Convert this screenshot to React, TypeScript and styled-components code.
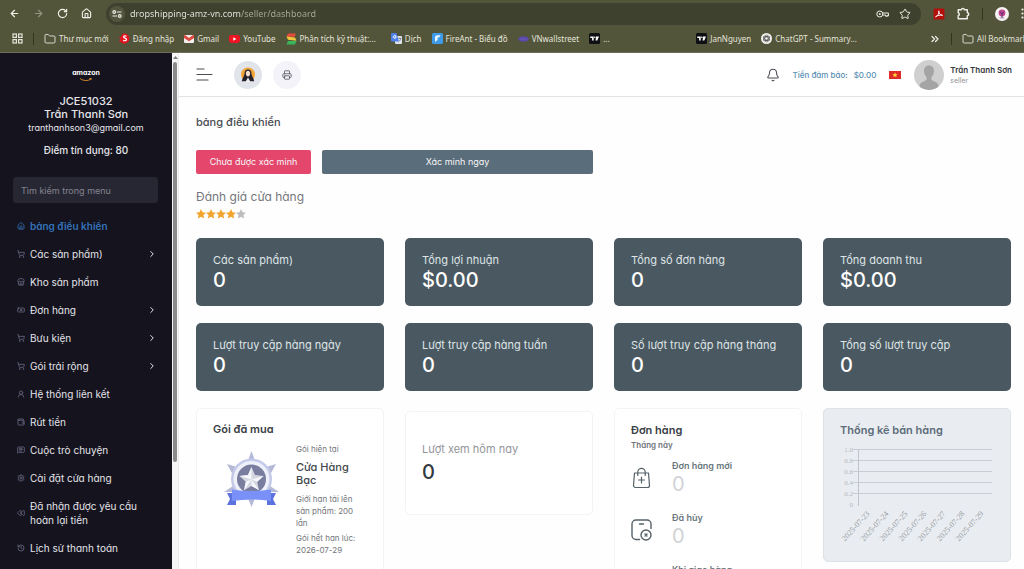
import React from "react";
import styled, { createGlobalStyle } from "styled-components";
import {
  ArrowLeft,
  ArrowRight,
  RotateCw,
  House,
  Star,
  Folder,
  ShoppingCart,
  Store,
  Banknote,
  UserRound,
  Wallet,
  MessageSquareText,
  Settings,
  Rewind,
  History,
  ChevronRight,
  ChevronsRight,
  Printer,
  Bell,
} from "lucide-react";

const GlobalStyle = createGlobalStyle`
  *, *::before, *::after { box-sizing: border-box; }
  html, body, #root { height: 100%; }
  body { margin: 0; overflow: hidden; background: #fff; font-family: Inter, "Noto Sans", sans-serif; font-feature-settings: "cv11"; }
  button, input { font: inherit; font-feature-settings: inherit; }
  button { border: 0; padding: 0; background: none; color: inherit; cursor: pointer; }
  a { color: inherit; text-decoration: none; }
  svg { display: block; flex: none; }
  h1, h2, h3, p, ul { margin: 0; padding: 0; }
`;

const Shell = styled.div`
  height: 100vh;
  display: flex;
  flex-direction: column;
  overflow: hidden;
`;

/* ---------- browser bars ---------- */

const BrowserBar = styled.div`
  flex: none;
  background: #53553b;
  color: #e4e4da;
  font-family: "Noto Sans", "Open Sans", sans-serif;
  font-feature-settings: normal;
  border-bottom: 1px solid #6d6d5c;
`;

const Toolbar = styled.div`
  height: 27px;
  display: flex;
  align-items: center;
  padding-left: 9px;
  overflow: hidden;
`;

const NavButtons = styled.div`
  display: flex;
  align-items: center;
  gap: 13px;
  width: 97px;
`;

const ToolButton = styled.button<{ $dim?: boolean }>`
  flex: none;
  color: ${(p) => (p.$dim ? "#92937f" : "#f0f0e8")};
`;

const Omnibox = styled.div`
  flex: 1;
  height: 22px;
  display: flex;
  align-items: center;
  gap: 10px;
  padding: 0 10px 0 3px;
  border-radius: 11px;
  background: #3f412f;
`;

const SiteInfo = styled.button`
  flex: none;
  width: 16px;
  height: 16px;
  border-radius: 50%;
  background: #53553f;
  display: grid;
  place-items: center;
`;

const AddressInput = styled.input`
  flex: 1;
  min-width: 0;
  margin-left: -5px;
  padding: 0;
  border: 0;
  outline: 0;
  font-size: 9px;
  line-height: 16px;
  color: #e4e4da;
  background: linear-gradient(90deg, #ededE5 111px, #a9aa9a 111px) text;
  -webkit-text-fill-color: transparent;
`;

const Extensions = styled.div`
  flex: none;
  width: 103px;
  display: flex;
  align-items: center;
  gap: 12px;
  padding-left: 12px;
`;

const Separator = styled.span`
  flex: none;
  width: 1px;
  height: 12px;
  background: #33351f;
`;

const BookmarkBar = styled.nav`
  height: 25px;
  display: flex;
  align-items: center;
  gap: 15px;
  padding: 0 0 2px 12px;
  font-size: 8px;
  line-height: 12px;
  white-space: nowrap;
  overflow: hidden;
`;

const BookmarkGroup = styled.div<{ $grow?: number }>`
  display: flex;
  align-items: center;
  gap: 10px;
  flex: ${(p) => (p.$grow ? `${p.$grow} 1 0` : "none")};
`;

const BookmarkTail = styled(BookmarkGroup)`
  width: 95px;
`;

const BookmarkLink = styled.a`
  flex: none;
  display: flex;
  align-items: center;
  gap: 3px;
`;

/* ---------- sidebar ---------- */

const Body = styled.div`
  flex: 1;
  min-height: 0;
  display: flex;
`;

const Sidebar = styled.aside`
  flex: none;
  width: 172px;
  padding: 15px 13px 0;
  overflow: hidden;
  background: #14131e;
  color: #e6e6ea;
`;

const Logo = styled.a`
  display: flex;
  flex-direction: column;
  align-items: center;
  font-size: 7px;
  line-height: 10px;
  font-weight: 700;
  color: #fff;
  margin: 0 0 13px;
`;

const SellerBlock = styled.div`
  text-align: center;
  margin: 0 -8px 20px;
`;

const SellerName = styled.p`
  font-size: 11px;
  line-height: 13px;
  font-weight: 500;
`;

const SellerMail = styled.p`
  font-size: 9px;
  line-height: 13px;
`;

const Credit = styled.p`
  margin-top: 9px;
  font-size: 10px;
  line-height: 14px;
  font-weight: 500;
`;

const MenuSearch = styled.input`
  display: block;
  width: 145px;
  height: 26px;
  padding: 0 8px;
  border: 0;
  border-radius: 3px;
  background: #272733;
  color: #fff;
  font-size: 9px;
  &::placeholder { color: #84848f; opacity: 1; }
`;

const Menu = styled.ul`
  list-style: none;
  margin: 9px 0 0;
`;

const MenuLink = styled.a<{ $active?: boolean }>`
  display: flex;
  align-items: center;
  gap: 5px;
  padding: 7px 2px 7px 4px;
  font-size: 10px;
  line-height: 14px;
  font-weight: ${(p) => (p.$active ? 600 : 400)};
  color: ${(p) => (p.$active ? "#3572b8" : "#e4e4e9")};
  > svg:first-child { color: ${(p) => (p.$active ? "#3572b8" : "#6b6a84")}; }
`;

const MenuLabel = styled.span`
  flex: 1;
`;

const ScrollTrack = styled.div`
  flex: none;
  width: 7px;
  display: flex;
  flex-direction: column;
  align-items: center;
  padding-top: 3px;
  gap: 3px;
  background: #f6f6f6;
  border-right: 1px solid #ececec;
`;

const ScrollThumb = styled.div`
  width: 4px;
  height: 78%;
  border-radius: 2px;
  background: #8b8b8b;
`;

/* ---------- main area ---------- */

const Main = styled.main`
  flex: 1;
  min-width: 0;
  overflow: hidden;
  background: #fefefe;
`;

const Header = styled.header`
  height: 44px;
  display: flex;
  align-items: center;
  padding: 0 12px 0 17px;
  border-bottom: 1px solid #e2e3e6;
  background: #fff;
`;

const RoundButton = styled.button<{ $tone: string; $gap: number }>`
  width: 28px;
  height: 28px;
  margin-left: ${(p) => p.$gap}px;
  border-radius: 50%;
  background: ${(p) => p.$tone};
  display: grid;
  place-items: center;
  color: #55565f;
`;

const HeaderRight = styled.div`
  margin-left: auto;
  display: flex;
  align-items: center;
  gap: 13px;
`;

const Deposit = styled.a`
  display: flex;
  gap: 6px;
  font-size: 8px;
  line-height: 12px;
  font-weight: 500;
  color: #5a90b5;
`;

const Profile = styled.button`
  display: flex;
  align-items: center;
  gap: 6px;
  text-align: left;
`;

const ProfileName = styled.span`
  display: block;
  font-size: 8px;
  line-height: 12px;
  font-weight: 600;
  color: #33363b;
`;

const ProfileRole = styled.span`
  display: block;
  font-size: 7px;
  line-height: 9px;
  color: #909296;
`;

const Content = styled.div`
  padding: 17px 13px 0 17px;
`;

const PageTitle = styled.h1`
  font-size: 11px;
  line-height: 16px;
  font-weight: 500;
  color: #4a4c52;
`;

const Grid = styled.div`
  display: grid;
  grid-template-columns: repeat(4, minmax(0, 1fr));
  column-gap: 21px;
  row-gap: 17px;
  align-items: start;
`;

const VerifyRow = styled(Grid)`
  margin: 20px 0 15px;
`;

const VerifyButtons = styled.div`
  grid-column: span 2;
  display: flex;
  gap: 11px;
`;

const VerifyButton = styled.button<{ $main?: boolean }>`
  flex: ${(p) => (p.$main ? "1" : "none")};
  width: 115px;
  height: 24px;
  border-radius: 2px;
  font-size: 9px;
  line-height: 12px;
  padding-bottom: 1px;
  color: #f6f6f8;
  background: ${(p) => (p.$main ? "#5a6d7a" : "#e4476b")};
`;

const RatingTitle = styled.h2`
  font-size: 12px;
  line-height: 16px;
  font-weight: 400;
  color: #75767b;
`;

const Stars = styled.div`
  display: flex;
  margin: 4px 0 19px;
`;

const StatCard = styled.section`
  height: 68px;
  padding: 14px 17px 0;
  border-radius: 5px;
  background: #4a5961;
  color: #fff;
`;

const StatLabel = styled.h3<{ $muted?: boolean }>`
  font-size: 11px;
  line-height: 16px;
  font-weight: 400;
  white-space: nowrap;
  color: ${(p) => (p.$muted ? "#93959b" : "#dfe4e7")};
`;

const StatValue = styled.p`
  font-size: 20px;
  line-height: 24px;
  font-weight: 500;
`;

const LowerGrid = styled(Grid)`
  margin-top: 17px;
`;

const Card = styled.section`
  padding: 13px 16px 30px;
  border: 1px solid #f3f3f4;
  border-radius: 5px;
  background: #fff;
`;

const PackageCard = styled(Card)`
  padding-top: 12px;
`;

const ViewsCard = styled(Card)`
  margin-top: 3px;
  height: 104px;
  padding-top: 29px;
  color: #33393f;
  ${StatValue} { margin-top: 3px; }
`;

const ChartCard = styled(Card)`
  height: 154px;
  padding-bottom: 0;
  background: #e9edf2;
  border-color: #dde2e7;
`;

const CardTitle = styled.h2<{ $tone?: string }>`
  font-size: 11px;
  line-height: 16px;
  font-weight: 600;
  color: ${(p) => p.$tone ?? "#3a4046"};
`;

const PackageRow = styled.div`
  display: flex;
  gap: 17px;
  margin-top: 6px;
  padding: 0 6px 0 11px;
  > svg { margin-top: 8px; }
`;

const PackageText = styled.div`
  flex: 1;
  font-size: 8px;
  line-height: 12px;
  color: #73767b;
`;

const PackageName = styled.p`
  margin: 6px 0;
  font-size: 11px;
  line-height: 13px;
  font-weight: 500;
  color: #42474c;
`;

const PackageLine = styled.p`
  margin-bottom: 3px;
`;

const Period = styled.p`
  font-size: 8px;
  line-height: 14px;
  font-weight: 600;
  color: #70757a;
`;

const OrderRow = styled.div`
  display: grid;
  grid-template-columns: 21px 1fr;
  column-gap: 20px;
  align-items: center;
  height: 34px;
  margin: 8px 0 18px;
  color: #566268;
`;

const OrderLabel = styled.p`
  font-size: 9px;
  line-height: 12px;
  font-weight: 600;
  color: #69767c;
`;

const OrderValue = styled.p`
  font-size: 20px;
  line-height: 24px;
  color: #cfd3d6;
`;

const Chart = styled.svg`
  width: 100%;
  overflow: visible;
  font-family: "Liberation Serif", serif;
`;

/* ---------- drawings ---------- */

const TuneIcon = () => (
  <svg width="10" height="8" viewBox="0 0 10 8" fill="none" stroke="#ecece4" strokeWidth="1.2">
    <circle cx="2.2" cy="2" r="1.3" />
    <path d="M4.8 2H9.500M.5 6h4.700" />
    <circle cx="7.8" cy="6" r="1.3" />
  </svg>
);

const KeyIcon = () => (
  <svg width="13" height="8" viewBox="0 0 13 8" fill="none" stroke="currentColor" strokeWidth="1">
    <circle cx="3.8" cy="4" r="3" />
    <circle cx="3.8" cy="4" r=".6" fill="currentColor" />
    <path d="M6.600 3h5.800v3h-1.200M6.500 5h3v1.200h1.800V5" />
  </svg>
);

const ExtensionIcon = () => (
  <svg width="13" height="13" viewBox="0 0 13 13" fill="none" stroke="currentColor" strokeWidth="1.4" strokeLinejoin="round">
    <path d="M1.200 2.800h3.300a1.400 1.400 0 0 1 2.800 0h3v3a1.400 1.400 0 0 1 0 2.900v3.100H1.200V8.700a1.500 1.500 0 0 0 0-2.900z" />
  </svg>
);

const DotsIcon = () => (
  <svg width="3" height="11" viewBox="0 0 3 11" fill="currentColor">
    <circle cx="1.5" cy="1.5" r="1.1" />
    <circle cx="1.5" cy="5.5" r="1.1" />
    <circle cx="1.5" cy="9.5" r="1.1" />
  </svg>
);

const AppsIcon = () => (
  <svg width="11" height="11" viewBox="0 0 11 11" fill="none" stroke="#e4e4da" strokeWidth="1.2">
    <rect x="1" y="1" width="3.4" height="3.4" />
    <rect x="6.6" y="1" width="3.4" height="3.4" />
    <rect x="1" y="6.6" width="3.4" height="3.4" />
    <rect x="6.6" y="6.6" width="3.4" height="3.4" />
  </svg>
);

const SIcon = () => (
  <svg width="11" height="11" viewBox="0 0 11 11">
    <path d="M3 1.2A5 5 0 1 1 2 9.3L0 8l1.6-1.6L0 4.6l2-.8z" fill="#e3131f" />
    <path d="M7.4 3.4C6.4 2.6 4.6 2.8 4.6 4s2.9 1 2.9 2.4S5.300 8.200 4.200 7.200" fill="none" stroke="#fff" strokeWidth="1.2" />
  </svg>
);

const GmailIcon = () => (
  <svg width="10" height="10" viewBox="0 0 10 10">
    <rect x="0" y="1" width="10" height="8" rx="1" fill="#f4efed" />
    <path d="M0 4V2a1 1 0 0 1 1.500-.8L5 4l3.500-2.800A1 1 0 0 1 10 2v2L5 7.300z" fill="#dc4a40" />
  </svg>
);

const YouTubeIcon = () => (
  <svg width="11" height="10" viewBox="0 0 11 10">
    <rect y="1" width="11" height="8" rx="2.4" fill="#ef1522" />
    <path d="M4.300 3.300 7.300 5 4.300 6.700z" fill="#fff" />
  </svg>
);

const StackIcon = () => (
  <svg width="11" height="12" viewBox="0 0 11 12">
    <path d="M2 .5h8L8.500 3.800H.5z" fill="#e84b3c" />
    <path d="M.5 3.600 9 4.500l1.500 3.300L2 6.800z" fill="#f0c63c" />
    <path d="M2 8h8.500L9 11.500H.5z" fill="#39b65a" />
  </svg>
);

const TranslateIcon = () => (
  <svg width="11" height="11" viewBox="0 0 11 11">
    <rect x="4" y="3" width="7" height="8" rx="1" fill="#dfe3ec" />
    <path d="M0 1a1 1 0 0 1 1-1h4.500L8 8.500H1a1 1 0 0 1-1-1z" fill="#4d7fe8" />
    <path d="M5.500 3.300H4v1.200h1.100A1.500 1.500 0 1 1 4.900 3" fill="none" stroke="#fff" strokeWidth=".8" />
    <path d="M7.500 5.500h2.600M8.800 4.700v.8M9.800 5.500c-.3 1.500-1 2.400-2 3" fill="none" stroke="#5b6478" strokeWidth=".7" />
  </svg>
);

const FireAntIcon = () => (
  <svg width="11" height="11" viewBox="0 0 11 11">
    <rect width="11" height="11" rx="1.5" fill="#3d9bea" />
    <path d="M3 9V4.500C3 3 4 2.300 5.400 2.300H8.500L7.200 4.600H5.600V7z" fill="#eaf6ff" />
  </svg>
);

const VnIcon = () => (
  <svg width="11" height="8" viewBox="0 0 11 8">
    <ellipse cx="5.5" cy="4" rx="5.2" ry="2.8" fill="#5a4aa8" />
    <path d="M2 3.200 4 5l1.500-1.800L7.200 5 9 3.200" fill="none" stroke="#6f61bd" strokeWidth=".8" />
  </svg>
);

const TradingViewIcon = () => (
  <svg width="11" height="11" viewBox="0 0 11 11">
    <rect width="11" height="11" rx="1.5" fill="#0f1013" />
    <path d="M1.300 3.500h3.400v4H3.100V5.100H1.300zM7 3.500h3L8.300 7.500H6.600z" fill="#fff" />
    <circle cx="5.8" cy="4.3" r=".8" fill="#fff" />
  </svg>
);

const ChatGptIcon = () => (
  <svg width="11" height="11" viewBox="0 0 11 11">
    <circle cx="5.5" cy="5.5" r="5.5" fill="#f1f1ee" />
    <g fill="none" stroke="#4b4c49" strokeWidth=".7">
      <ellipse cx="5.5" cy="5.5" rx="1.7" ry="3.5" />
      <ellipse cx="5.5" cy="5.5" rx="1.7" ry="3.5" transform="rotate(60 5.5 5.5)" />
      <ellipse cx="5.5" cy="5.5" rx="1.7" ry="3.5" transform="rotate(120 5.5 5.5)" />
    </g>
  </svg>
);

const PdfIcon = () => (
  <svg width="12" height="12" viewBox="0 0 12 12">
    <rect x=".5" y=".5" width="11" height="11" rx="1.5" fill="#b3100c" />
    <path d="M2.500 8.800C5 8 6.200 5.500 5.800 2.800 5.800 5.500 7 7 9.600 7.300 7.300 6.800 4.600 7.300 2.500 8.800z" fill="none" stroke="#fff" strokeWidth=".9" />
  </svg>
);

const AccountIcon = () => (
  <svg width="14" height="14" viewBox="0 0 14 14">
    <circle cx="7" cy="7" r="7" fill="#f7f1f4" />
    <circle cx="7" cy="6" r="3.4" fill="#c2468c" />
    <path d="M5 4.500 7 7l2-2.500M7 7v4" stroke="#5a2c7a" strokeWidth="1" fill="none" />
    <path d="M4.500 11h5" stroke="#9a8fa0" strokeWidth=".8" />
  </svg>
);

const Smile = () => (
  <svg width="14" height="4" viewBox="0 0 14 4">
    <path d="M1 .5c3.500 2.600 8 2.600 11 .4M10.300.5h2l-.5 1.600" fill="none" stroke="#d98a2b" strokeWidth="1" />
  </svg>
);

const MenuLines = () => (
  <svg width="17" height="15" viewBox="0 0 17 15" stroke="#4c4d53" strokeWidth="1.2" strokeLinecap="round">
    <path d="M1 2h7M1 7.500h15M1 13h11" />
  </svg>
);

const WomanIcon = () => (
  <svg width="16" height="16" viewBox="0 0 16 16">
    <circle cx="8" cy="7.5" r="7" fill="#f0a53a" />
    <path d="M8 2.500C5.600 2.500 4.700 4 4.600 6.200 4.400 9 2.500 10.500 1.800 14.200h12.400C13.500 10.500 11.600 9 11.400 6.200 11.300 4 10.400 2.500 8 2.500z" fill="#25222b" />
    <ellipse cx="8" cy="6.6" rx="2.1" ry="2.8" fill="#f6dfd2" />
    <path d="M5.500 15 8 10.500l2.500 4.500z" fill="#f4f1f3" />
  </svg>
);

const Flag = () => (
  <svg width="12" height="8" viewBox="0 0 12 8" role="img" aria-label="Tiếng Việt">
    <rect width="12" height="8" fill="#dd2c27" />
    <path d="M6 1.300l.7 1.900h2L7.100 4.400l.6 1.900L6 5.200 4.300 6.300l.6-1.900-1.600-1.200h2z" fill="#ffdc3c" />
  </svg>
);

const Avatar = () => (
  <svg width="30" height="30" viewBox="0 0 30 30">
    <clipPath id="avatar-clip"><circle cx="15" cy="15" r="15" /></clipPath>
    <g clipPath="url(#avatar-clip)">
      <rect width="30" height="30" fill="#cfcfcf" />
      <path d="M15 5.500c-3.400 0-5.200 2.600-5 5.800.2 2.700 1.200 4.600 2.500 5.900v2.500c-1 1.600-5.800 2-7 5.300V30h19v-5c-1.200-3.300-6-3.700-7-5.300v-2.500c1.300-1.300 2.300-3.200 2.500-5.900.2-3.200-1.600-5.800-5-5.800z" fill="#a4a4a4" />
    </g>
  </svg>
);

const StarIcon = ({ on }: { on: boolean }) => (
  <svg width="10" height="10" viewBox="0 0 10 10">
    <path d="M5 0l1.500 3.200 3.500.450-2.550 2.400.65 3.500L5 7.850 1.900 9.550l.65-3.500L0 3.650l3.500-.45z" fill={on ? "#f2a42e" : "#bdbdc0"} />
  </svg>
);

const SilverBadge = () => (
  <svg width="55" height="57" viewBox="0 0 55 57">
    <path d="M27.500 0l4 11h-8zM27.500 56l-4-10h8zM3 13l10 3-4.500 7zM52 13l-10 3 4.500 7zM0 41l9-6 3 6zM55 41l-9-6-3 6z" fill="#b4b9d8" />
    <circle cx="27.5" cy="28" r="20.5" fill="#c3c9e8" />
    <circle cx="27.5" cy="28" r="18" fill="#eef0fa" />
    <circle cx="27.5" cy="28" r="14.5" fill="#797d9e" />
    <path d="M27.500 16l3.500 8 8.600.9-6.400 5.800 1.800 8.500-7.500-4.300-7.500 4.300 1.800-8.500-6.400-5.800 8.600-.9z" fill="#d4d7e2" />
    <path d="M27.500 16v12.500L24 24zM39.600 24.900 27.500 28.500l5.700 2.200zM35 39.200l-7.500-10.700v6.400zM20 39.200l7.500-10.700-5.700 2.200zM15.400 24.900l12.100 3.600L24 24z" fill="#f6f7fb" />
    <path d="M3 42h9v12H3l3-6zM52 42h-9v12h9l-3-6z" fill="#5c72dd" />
    <path d="M8 38.500q19.500 3 39 0v11.500q-19.500-3-39 0z" fill="#7890f8" />
  </svg>
);

const BagPlusIcon = () => (
  <svg width="21" height="22" viewBox="0 0 21 22" fill="none" stroke="currentColor" strokeWidth="1.2" strokeLinecap="round" strokeLinejoin="round">
    <path d="M3.500 6h14l1 12.500a2 2 0 0 1-2 2h-12a2 2 0 0 1-2-2z" />
    <path d="M6.800 8.500V5a3.700 3.700 0 0 1 7.400 0v3.500M10.500 10v6M7.500 13h6" />
  </svg>
);

const BoxCancelIcon = () => (
  <svg width="21" height="22" viewBox="0 0 21 22" fill="none" stroke="currentColor" strokeWidth="1.4" strokeLinecap="round">
    <path d="M8.500 20.500H5a4 4 0 0 1-4-4V5a4 4 0 0 1 4-4h11a4 4 0 0 1 4 4v4.500M8.500 5h4" />
    <circle cx="15" cy="16" r="5" />
    <path d="M14 15l2 2M16 15l-2 2" />
  </svg>
);

/* ---------- data ---------- */

const bookmarks = [
  { label: "Đăng nhập", icon: <SIcon /> },
  { label: "Gmail", icon: <GmailIcon /> },
  { label: "YouTube", icon: <YouTubeIcon /> },
  { label: "Phân tích kỹ thuật:...", icon: <StackIcon /> },
];

const moreBookmarks = [
  { label: "Dịch", icon: <TranslateIcon /> },
  { label: "FireAnt - Biểu đồ", icon: <FireAntIcon /> },
  { label: "VNwallstreet", icon: <VnIcon /> },
  { label: "...", icon: <TradingViewIcon /> },
];

const lastBookmarks = [
  { label: "JanNguyen", icon: <TradingViewIcon /> },
  { label: "ChatGPT - Summary...", icon: <ChatGptIcon /> },
];

const menu = [
  { label: "bảng điều khiển", icon: House, active: true },
  { label: "Các sản phẩm)", icon: ShoppingCart, nested: true },
  { label: "Kho sản phẩm", icon: Store },
  { label: "Đơn hàng", icon: Banknote, nested: true },
  { label: "Bưu kiện", icon: ShoppingCart, nested: true },
  { label: "Gói trải rộng", icon: ShoppingCart, nested: true },
  { label: "Hệ thống liên kết", icon: UserRound },
  { label: "Rút tiền", icon: Wallet },
  { label: "Cuộc trò chuyện", icon: MessageSquareText },
  { label: "Cài đặt cửa hàng", icon: Settings },
  { label: "Đã nhận được yêu cầu hoàn lại tiền", icon: Rewind },
  { label: "Lịch sử thanh toán", icon: History },
];

const stats = [
  ["Các sản phẩm)", "0"],
  ["Tổng lợi nhuận", "$0.00"],
  ["Tổng số đơn hàng", "0"],
  ["Tổng doanh thu", "$0.00"],
  ["Lượt truy cập hàng ngày", "0"],
  ["Lượt truy cập hàng tuần", "0"],
  ["Số lượt truy cập hàng tháng", "0"],
  ["Tổng số lượt truy cập", "0"],
];

const ticks = ["1.0", "0.8", "0.6", "0.4", "0.2", "0"];
const days = [23, 24, 25, 26, 27, 28, 29];

const Bookmarks = ({ items }: { items: typeof bookmarks }) => (
  <>
    {items.map((b) => (
      <BookmarkLink href="#" key={b.label}>
        {b.icon}
        {b.label}
      </BookmarkLink>
    ))}
  </>
);

const SalesChart = () => (
  <Chart viewBox="0 0 154 100" role="img" aria-label="Thống kê bán hàng">
    {ticks.map((t, i) => (
      <g key={t}>
        {i < 5 && <path d={`M13 ${11.5 + i * 11}H152`} stroke="#c9cdd3" />}
        <text x="13" y={14 + i * 11} fontSize="7" textAnchor="end" fill="#b4b8bd">{t}</text>
      </g>
    ))}
    <path d="M18.500 11v57" stroke="#c0c4ca" />
    {days.map((d, i) => (
      <text key={d} fontSize="8" textAnchor="end" fill="#989ca1" transform={`translate(${30 + i * 19} 76) rotate(-48)`}>
        {`2025-07-${d}`}
      </text>
    ))}
  </Chart>
);

export default function App() {
  return (
    <Shell>
      <GlobalStyle />
      <BrowserBar>
        <Toolbar>
          <NavButtons>
            <ToolButton aria-label="Quay lại"><ArrowLeft size={11} strokeWidth={2.6} /></ToolButton>
            <ToolButton $dim aria-label="Tiến"><ArrowRight size={11} strokeWidth={2.6} /></ToolButton>
            <ToolButton aria-label="Tải lại"><RotateCw size={11} strokeWidth={2.6} /></ToolButton>
            <ToolButton aria-label="Trang chủ"><House size={11} strokeWidth={2.4} /></ToolButton>
          </NavButtons>
          <Omnibox>
            <SiteInfo aria-label="Thông tin trang"><TuneIcon /></SiteInfo>
            <AddressInput aria-label="Địa chỉ" defaultValue="dropshipping-amz-vn.com/seller/dashboard" />
            <ToolButton aria-label="Mật khẩu"><KeyIcon /></ToolButton>
            <ToolButton aria-label="Đánh dấu"><Star size={12} /></ToolButton>
          </Omnibox>
          <Extensions>
            <ToolButton aria-label="PDF"><PdfIcon /></ToolButton>
            <ToolButton aria-label="Tiện ích"><ExtensionIcon /></ToolButton>
            <Separator />
            <ToolButton aria-label="Tài khoản"><AccountIcon /></ToolButton>
            <ToolButton aria-label="Menu"><DotsIcon /></ToolButton>
          </Extensions>
        </Toolbar>
        <BookmarkBar>
          <BookmarkGroup>
            <AppsIcon />
            <Separator />
            <BookmarkLink href="#"><Folder size={12} strokeWidth={1.8} />Thư mục mới</BookmarkLink>
            <Bookmarks items={bookmarks} />
          </BookmarkGroup>
          <BookmarkGroup $grow={4}>
            <Bookmarks items={moreBookmarks} />
          </BookmarkGroup>
          <BookmarkGroup $grow={3}>
            <Bookmarks items={lastBookmarks} />
          </BookmarkGroup>
          <BookmarkTail>
            <ToolButton aria-label="Thêm dấu trang"><ChevronsRight size={12} strokeWidth={2.4} /></ToolButton>
            <Separator />
            <BookmarkLink href="#"><Folder size={12} strokeWidth={1.8} />All Bookmarks</BookmarkLink>
          </BookmarkTail>
        </BookmarkBar>
      </BrowserBar>

      <Body>
        <Sidebar>
          <Logo href="#">amazon<Smile /></Logo>
          <SellerBlock>
            <SellerName>JCE51032</SellerName>
            <SellerName>Trần Thanh Sơn</SellerName>
            <SellerMail>tranthanhson3@gmail.com</SellerMail>
            <Credit>Điểm tín dụng: 80</Credit>
          </SellerBlock>
          <MenuSearch type="search" aria-label="Tìm kiếm trong menu" placeholder="Tìm kiếm trong menu" />
          <Menu>
            {menu.map(({ label, icon: Icon, active, nested }) => (
              <li key={label}>
                <MenuLink href="#" $active={active}>
                  <Icon size={8} strokeWidth={2.4} />
                  <MenuLabel>{label}</MenuLabel>
                  {nested && <ChevronRight size={10} strokeWidth={2.4} />}
                </MenuLink>
              </li>
            ))}
          </Menu>
        </Sidebar>
        <ScrollTrack>
          <svg width="5" height="3" viewBox="0 0 5 3"><path d="M0 3 2.500 0 5 3z" fill="#7d7d7d" /></svg>
          <ScrollThumb />
        </ScrollTrack>

        <Main>
          <Header>
            <ToolButton aria-label="Thu gọn menu"><MenuLines /></ToolButton>
            <RoundButton $tone="#e1e4ea" $gap={21} aria-label="Cửa hàng"><WomanIcon /></RoundButton>
            <RoundButton $tone="#f3f3f9" $gap={11} aria-label="In"><Printer size={10} /></RoundButton>
            <HeaderRight>
              <ToolButton aria-label="Thông báo"><Bell size={14} color="#4a4c55" strokeWidth={1.8} /></ToolButton>
              <Deposit href="#"><span>Tiền đảm bảo:</span><span>$0.00</span></Deposit>
              <Flag />
              <Profile>
                <Avatar />
                <span>
                  <ProfileName>Trần Thanh Sơn</ProfileName>
                  <ProfileRole>seller</ProfileRole>
                </span>
              </Profile>
            </HeaderRight>
          </Header>

          <Content>
            <PageTitle>bảng điều khiển</PageTitle>
            <VerifyRow>
              <VerifyButtons>
                <VerifyButton>Chưa được xác minh</VerifyButton>
                <VerifyButton $main>Xác minh ngay</VerifyButton>
              </VerifyButtons>
            </VerifyRow>
            <RatingTitle>Đánh giá cửa hàng</RatingTitle>
            <Stars role="img" aria-label="4/5">
              {[1, 2, 3, 4, 5].map((n) => <StarIcon key={n} on={n < 5} />)}
            </Stars>

            <Grid>
              {stats.map(([label, value]) => (
                <StatCard key={label}>
                  <StatLabel>{label}</StatLabel>
                  <StatValue>{value}</StatValue>
                </StatCard>
              ))}
            </Grid>

            <LowerGrid>
              <PackageCard>
                <CardTitle>Gói đã mua</CardTitle>
                <PackageRow>
                  <SilverBadge />
                  <PackageText>
                    <p>Gói hiện tại</p>
                    <PackageName>Cửa Hàng Bạc</PackageName>
                    <PackageLine>Giới hạn tải lên sản phẩm: 200 lần</PackageLine>
                    <PackageLine>Gói hết hạn lúc: 2026-07-29</PackageLine>
                  </PackageText>
                </PackageRow>
              </PackageCard>
              <ViewsCard>
                <StatLabel $muted>Lượt xem hôm nay</StatLabel>
                <StatValue>0</StatValue>
              </ViewsCard>
              <Card>
                <CardTitle>Đơn hàng</CardTitle>
                <Period>Tháng này</Period>
                <OrderRow>
                  <BagPlusIcon />
                  <div><OrderLabel>Đơn hàng mới</OrderLabel><OrderValue>0</OrderValue></div>
                </OrderRow>
                <OrderRow>
                  <BoxCancelIcon />
                  <div><OrderLabel>Đã hủy</OrderLabel><OrderValue>0</OrderValue></div>
                </OrderRow>
                <OrderRow>
                  <span />
                  <div><OrderLabel>Khi giao hàng</OrderLabel><OrderValue>0</OrderValue></div>
                </OrderRow>
              </Card>
              <ChartCard>
                <CardTitle $tone="#5d6c79">Thống kê bán hàng</CardTitle>
                <SalesChart />
              </ChartCard>
            </LowerGrid>
          </Content>
        </Main>
      </Body>
    </Shell>
  );
}
